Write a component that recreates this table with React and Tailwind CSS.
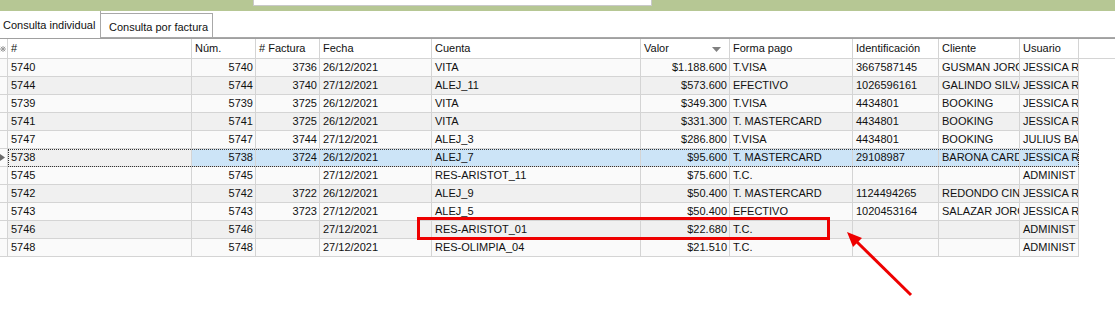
import React from 'react'

const font = { fontFamily: '"Liberation Sans", Arial, sans-serif' }

const cols = [
  { key: 'id', label: '#', w: 'w-[184px]' },
  { key: 'num', label: 'Núm.', w: 'w-[64px]', right: true },
  { key: 'fac', label: '# Factura', w: 'w-[64px]', right: true },
  { key: 'fecha', label: 'Fecha', w: 'w-[112px]' },
  { key: 'cuenta', label: 'Cuenta', w: 'w-[209px]' },
  { key: 'valor', label: 'Valor', w: 'w-[89px]', right: true, sort: true },
  { key: 'forma', label: 'Forma pago', w: 'w-[123px]' },
  { key: 'ident', label: 'Identificación', w: 'w-[86px]' },
  { key: 'cliente', label: 'Cliente', w: 'w-[81px]' },
  { key: 'usuario', label: 'Usuario', w: 'w-[59px]' },
]

// textos recortados tal como los deja ver la columna
const rows = [
  ['5740', '5740', '3736', '26/12/2021', 'VITA', '$1.188.600', 'T.VISA', '3667587145', 'GUSMAN JORG', 'JESSICA R'],
  ['5744', '5744', '3740', '27/12/2021', 'ALEJ_11', '$573.600', 'EFECTIVO', '1026596161', 'GALINDO SILVA', 'JESSICA R'],
  ['5739', '5739', '3725', '26/12/2021', 'VITA', '$349.300', 'T.VISA', '4434801', 'BOOKING', 'JESSICA R'],
  ['5741', '5741', '3725', '26/12/2021', 'VITA', '$331.300', 'T. MASTERCARD', '4434801', 'BOOKING', 'JESSICA R'],
  ['5747', '5747', '3744', '27/12/2021', 'ALEJ_3', '$286.800', 'T.VISA', '4434801', 'BOOKING', 'JULIUS BA'],
  ['5738', '5738', '3724', '26/12/2021', 'ALEJ_7', '$95.600', 'T. MASTERCARD', '29108987', 'BARONA CARD', 'JESSICA R'],
  ['5745', '5745', '', '27/12/2021', 'RES-ARISTOT_11', '$75.600', 'T.C.', '', '', 'ADMINIST'],
  ['5742', '5742', '3722', '26/12/2021', 'ALEJ_9', '$50.400', 'T. MASTERCARD', '1124494265', 'REDONDO  CIN', 'JESSICA R'],
  ['5743', '5743', '3723', '27/12/2021', 'ALEJ_5', '$50.400', 'EFECTIVO', '1020453164', 'SALAZAR JORG', 'JESSICA R'],
  ['5746', '5746', '', '27/12/2021', 'RES-ARISTOT_01', '$22.680', 'T.C.', '', '', 'ADMINIST'],
  ['5748', '5748', '', '27/12/2021', 'RES-OLIMPIA_04', '$21.510', 'T.C.', '', '', 'ADMINIST'],
]

const SELECTED = 5

export default function App() {
  return (
    <div className="relative w-[1115px] h-[309px] overflow-hidden bg-white text-[11px] text-[#111]" style={font}>
      {/* barra superior */}
      <div className="h-[11px] bg-[#b6c794] flex">
        <div className="ml-[253px] w-[399px] h-[6px] bg-white border-l border-r border-b border-[#c9c9c9]" />
      </div>

      {/* pestañas */}
      <div className="flex h-[27px]">
        <div className="w-[101px] border-r border-[#a8a8a8] bg-white pl-[3px] pt-[8px] leading-[13px]">Consulta individual</div>
        <div className="mt-[2px] w-[112px] border-t border-r border-b border-[#a8a8a8] bg-white pl-[8px] pt-[7px] leading-[13px]">Consulta por factura</div>
        <div className="flex-1 border-b border-[#a8a8a8]" />
      </div>

      {/* grilla */}
      <div className="border-t border-[#a0a0a0] w-[1115px]">
        <div className="flex h-[20px] border-b border-[#d4d4d4]">
          <div className="w-[8px] border-r border-[#d4d4d4] flex items-center">
            <svg width="6" height="6" viewBox="0 0 6 6">
              <path d="M3 0V6M0 3H6M0.8 0.8L5.2 5.2M5.2 0.8L0.8 5.2" stroke="#9a9a9a" strokeWidth="1" />
            </svg>
          </div>
          {cols.map(c => (
            <div key={c.key} className={`${c.w} shrink-0 border-r border-[#d4d4d4] pl-[3px] pr-[2px] flex items-center justify-between leading-[13px]`}>
              <span>{c.label}</span>
              {c.sort && (
                <svg width="9" height="5" viewBox="0 0 9 5" className="mr-[6px] mt-[1px]">
                  <path d="M0 0H9L4.5 5Z" fill="#808080" />
                </svg>
              )}
            </div>
          ))}
          <div className="flex-1" />
        </div>

        {rows.map((r, i) => {
          const even = i % 2 === 1
          const sel = i === SELECTED
          return (
            <div key={i} className="relative flex h-[18px]">
              <div className="w-[8px] shrink-0 border-r border-b border-[#d4d4d4] bg-[#fafafa] flex items-center">
                {sel && (
                  <svg width="5" height="7" viewBox="0 0 5 7">
                    <path d="M0 0L5 3.5L0 7Z" fill="#6b6b6b" />
                  </svg>
                )}
              </div>
              {cols.map((c, j) => {
                const bg = sel && j > 0 ? 'bg-[#cce4f7]' : even ? 'bg-[#f0f0f0]' : 'bg-[#fafafa]'
                return (
                  <div
                    key={c.key}
                    className={`${c.w} ${bg} shrink-0 border-r border-b border-[#d4d4d4] overflow-hidden whitespace-nowrap flex items-center leading-[13px] ${c.right ? 'justify-end pr-[2px]' : 'pl-[3px]'}`}
                  >
                    {r[j]}
                  </div>
                )
              })}
              <div className="flex-1" />
              {sel && (
                <div className="absolute left-[8px] top-0 w-[1071px] h-[18px] border border-dotted border-[#333]" />
              )}
            </div>
          )
        })}
      </div>

      {/* anotación */}
      <div className="absolute left-[417px] top-[217px] w-[413px] h-[23px] border-[3px] border-[#ee0000]" />
      <svg className="absolute left-0 top-0" width="1115" height="309" viewBox="0 0 1115 309">
        <line x1="911" y1="295" x2="856" y2="241" stroke="#ee0000" strokeWidth="3" />
        <path d="M847 232L862 238L853 247Z" fill="#ee0000" />
      </svg>
    </div>
  )
}
